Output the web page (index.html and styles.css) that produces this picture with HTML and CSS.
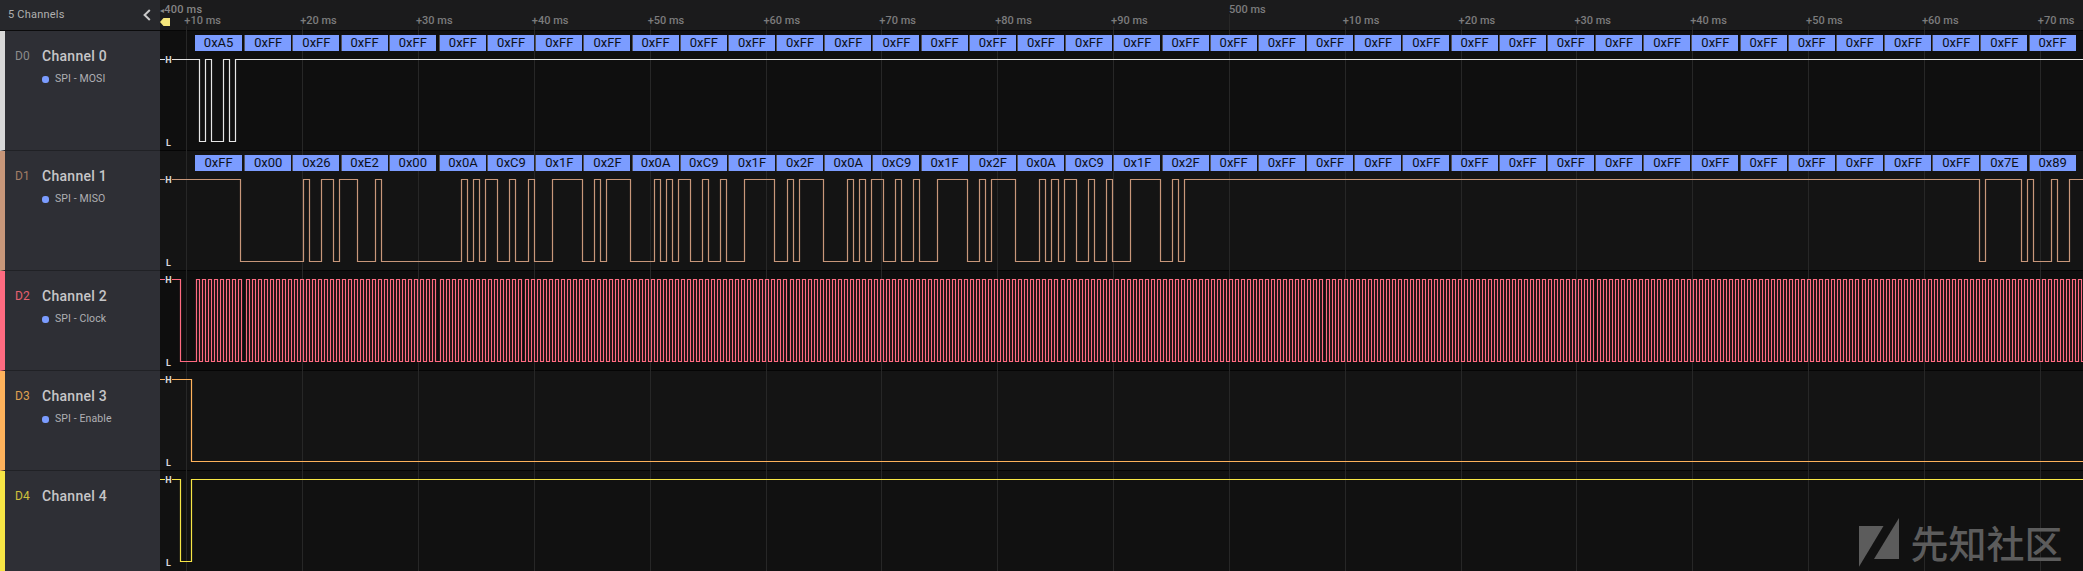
FILE: index.html
```html
<!DOCTYPE html>
<html lang="en">
<head>
<meta charset="utf-8">
<title>Logic capture</title>
<link rel="stylesheet" href="styles.css">
</head>
<body>
<div class="app">
  <aside class="side">
    <header class="side-head">
      <span>5 Channels</span>
      <svg class="chev" width="8" height="12" viewBox="0 0 8 12"><path d="M6.8 1 L1.6 6 L6.8 11"/></svg>
    </header>
    <section class="chan tall c0">
      <span class="chan-id">D0</span>
      <div class="chan-body"><div class="chan-name">Channel 0</div><div class="chan-tag"><i class="dot"></i>SPI - MOSI</div></div>
    </section>
    <section class="chan tall c1">
      <span class="chan-id">D1</span>
      <div class="chan-body"><div class="chan-name">Channel 1</div><div class="chan-tag"><i class="dot"></i>SPI - MISO</div></div>
    </section>
    <section class="chan c2">
      <span class="chan-id">D2</span>
      <div class="chan-body"><div class="chan-name">Channel 2</div><div class="chan-tag"><i class="dot"></i>SPI - Clock</div></div>
    </section>
    <section class="chan c3">
      <span class="chan-id">D3</span>
      <div class="chan-body"><div class="chan-name">Channel 3</div><div class="chan-tag"><i class="dot"></i>SPI - Enable</div></div>
    </section>
    <section class="chan last c4">
      <span class="chan-id">D4</span>
      <div class="chan-body"><div class="chan-name">Channel 4</div></div>
    </section>
  </aside>

  <main class="main">
    <div class="ruler">
      <span class="ruler-start"><span class="arrow">◂</span>400 ms</span>
      <svg class="marker" width="10" height="8" viewBox="0 0 10 8"><path d="M0 4 L3.5 0 H10 V8 H3.5 Z"/></svg>
    </div>
    <div class="grid">
      <div class="tick"><span class="tick-label">+10 ms</span><i class="tick-line"></i></div>
      <div class="tick"><span class="tick-label">+20 ms</span><i class="tick-line"></i></div>
      <div class="tick"><span class="tick-label">+30 ms</span><i class="tick-line"></i></div>
      <div class="tick"><span class="tick-label">+40 ms</span><i class="tick-line"></i></div>
      <div class="tick"><span class="tick-label">+50 ms</span><i class="tick-line"></i></div>
      <div class="tick"><span class="tick-label">+60 ms</span><i class="tick-line"></i></div>
      <div class="tick"><span class="tick-label">+70 ms</span><i class="tick-line"></i></div>
      <div class="tick"><span class="tick-label">+80 ms</span><i class="tick-line"></i></div>
      <div class="tick"><span class="tick-label">+90 ms</span><i class="tick-line"></i></div>
      <div class="tick major"><span class="tick-label">500 ms</span><i class="tick-line"></i></div>
      <div class="tick"><span class="tick-label">+10 ms</span><i class="tick-line"></i></div>
      <div class="tick"><span class="tick-label">+20 ms</span><i class="tick-line"></i></div>
      <div class="tick"><span class="tick-label">+30 ms</span><i class="tick-line"></i></div>
      <div class="tick"><span class="tick-label">+40 ms</span><i class="tick-line"></i></div>
      <div class="tick"><span class="tick-label">+50 ms</span><i class="tick-line"></i></div>
      <div class="tick"><span class="tick-label">+60 ms</span><i class="tick-line"></i></div>
      <div class="tick"><span class="tick-label">+70 ms</span><i class="tick-line"></i></div>
    </div>

    <div class="row tall r0" data-ch="0">
      <div class="bytes">
        <span class="byte first">0xA5</span><span class="byte">0xFF</span><span class="byte">0xFF</span><span class="byte">0xFF</span><span class="byte">0xFF</span><span class="byte skew">0xFF</span><span class="byte">0xFF</span><span class="byte">0xFF</span><span class="byte">0xFF</span><span class="byte">0xFF</span><span class="byte">0xFF</span><span class="byte">0xFF</span><span class="byte">0xFF</span><span class="byte">0xFF</span><span class="byte">0xFF</span><span class="byte">0xFF</span><span class="byte">0xFF</span><span class="byte">0xFF</span><span class="byte">0xFF</span><span class="byte">0xFF</span><span class="byte">0xFF</span><span class="byte">0xFF</span><span class="byte">0xFF</span><span class="byte">0xFF</span><span class="byte">0xFF</span><span class="byte">0xFF</span><span class="byte">0xFF</span><span class="byte">0xFF</span><span class="byte">0xFF</span><span class="byte">0xFF</span><span class="byte">0xFF</span><span class="byte">0xFF</span><span class="byte">0xFF</span><span class="byte">0xFF</span><span class="byte">0xFF</span><span class="byte">0xFF</span><span class="byte">0xFF</span><span class="byte">0xFF</span><span class="byte">0xFF</span>
      </div>
      <span class="lv lv-h">H</span><span class="lv lv-l">L</span>
    </div>
    <div class="row tall r1" data-ch="1">
      <div class="bytes">
        <span class="byte first">0xFF</span><span class="byte">0x00</span><span class="byte">0x26</span><span class="byte">0xE2</span><span class="byte">0x00</span><span class="byte skew">0x0A</span><span class="byte">0xC9</span><span class="byte">0x1F</span><span class="byte">0x2F</span><span class="byte">0x0A</span><span class="byte">0xC9</span><span class="byte">0x1F</span><span class="byte">0x2F</span><span class="byte">0x0A</span><span class="byte">0xC9</span><span class="byte">0x1F</span><span class="byte">0x2F</span><span class="byte">0x0A</span><span class="byte">0xC9</span><span class="byte">0x1F</span><span class="byte">0x2F</span><span class="byte">0xFF</span><span class="byte">0xFF</span><span class="byte">0xFF</span><span class="byte">0xFF</span><span class="byte">0xFF</span><span class="byte">0xFF</span><span class="byte">0xFF</span><span class="byte">0xFF</span><span class="byte">0xFF</span><span class="byte">0xFF</span><span class="byte">0xFF</span><span class="byte">0xFF</span><span class="byte">0xFF</span><span class="byte">0xFF</span><span class="byte">0xFF</span><span class="byte">0xFF</span><span class="byte">0x7E</span><span class="byte">0x89</span>
      </div>
      <span class="lv lv-h">H</span><span class="lv lv-l">L</span>
    </div>
    <div class="row r2" data-ch="2"><span class="lv lv-h">H</span><span class="lv lv-l">L</span></div>
    <div class="row r3" data-ch="3"><span class="lv lv-h">H</span><span class="lv lv-l">L</span></div>
    <div class="row last r4" data-ch="4"><span class="lv lv-h">H</span><span class="lv lv-l">L</span></div>
  </main>

  <div class="watermark">
    <svg width="41" height="49" viewBox="0 0 41 49"><path d="M0 8 H24.5 L0 48.7 Z"/><path d="M40 0 V41 H15 Z"/></svg>
    <span>先知社区</span>
  </div>
</div>
<script src="app.js"></script>
</body>
</html>
```

FILE: styles.css
```css
* { box-sizing: border-box; }
html, body { margin: 0; background: #111; }
.app {
  position: relative;
  display: flex;
  width: 2083px;
  height: 571px;
  overflow: hidden;
  font-family: Roboto, "Noto Sans", sans-serif;
}

/* channel sidebar */
.side { flex: 0 0 160px; display: flex; flex-direction: column; background: #2e2f35; }
.side-head {
  height: 31px;
  flex: none;
  display: flex;
  align-items: center;
  justify-content: space-between;
  padding: 0 9px 1px 8px;
  background: #27282c;
  border-bottom: 1px solid #0b0b0c;
  color: #b0b0b0;
  font-size: 11px;
  letter-spacing: .02em;
}
.chev path { fill: none; stroke: #c9c9c9; stroke-width: 2; }
.chan {
  height: 100px;
  flex: none;
  display: flex;
  padding: 15px 0 0 10px;
  border-left: 5px solid #888;
  border-bottom: 1px solid #202125;
}
.chan.tall { height: 120px; }
.chan.last { flex: 1; border-bottom: 0; }
.chan-id { flex: 0 0 27px; font-size: 12px; line-height: 20px; }
.chan-name { font-size: 14px; font-weight: 500; line-height: 20px; color: #c6c6c8; letter-spacing: .02em; }
.chan-tag {
  display: flex;
  align-items: center;
  gap: 6px;
  margin-top: 3px;
  font-size: 10.5px;
  line-height: 20px;
  color: #b0b0b4;
  letter-spacing: .01em;
}
.dot { width: 7px; height: 7px; border-radius: 3px; background: #7b9cff; }
.c0 { border-left-color: #d8d8d8; }
.c1 { border-left-color: #c8977a; }
.c2 { border-left-color: #ff6b81; }
.c3 { border-left-color: #ffb35c; }
.c4 { border-left-color: #f7e645; }
.c0 .chan-id { color: #8c8c8c; }
.c1 .chan-id { color: #a17d66; }
.c2 .chan-id { color: #e5606f; }
.c3 .chan-id { color: #dfa050; }
.c4 .chan-id { color: #cfc03c; }

/* timeline */
.main { position: relative; flex: 1; min-width: 0; display: flex; flex-direction: column; }
.ruler {
  position: relative;
  height: 31px;
  flex: none;
  background: #1b1b1c;
  border-bottom: 1px solid #060606;
}
.ruler-start {
  position: absolute;
  left: 0;
  top: 3px;
  font-size: 11px;
  line-height: 13px;
  font-weight: 500;
  color: #858585;
  white-space: nowrap;
  letter-spacing: .02em;
}
.arrow { font-family: "DejaVu Sans", sans-serif; font-size: 8px; }
.marker { position: absolute; left: 0; top: 18px; z-index: 3; }
.marker path { fill: #f5e77c; }

.grid {
  position: absolute;
  inset: 0;
  z-index: 1;
  display: flex;
  padding-left: 26.3px;
  overflow: hidden;
  pointer-events: none;
}
.tick { flex: 0 0 115.85px; display: flex; flex-direction: column; }
.tick-label {
  height: 26px;
  padding-top: 14px;
  margin-left: -2px;
  font-size: 11px;
  line-height: 13px;
  font-weight: 500;
  color: #7c7c7c;
  white-space: nowrap;
}
.tick.major .tick-label { height: 14px; padding-top: 3px; margin-left: 0; }
.tick-line { flex: 1; width: 1px; background: #272727; }

.row { position: relative; height: 100px; flex: none; border-bottom: 1px solid #050505; }
.row.tall { height: 120px; }
.row.last { flex: 1; height: auto; border-bottom: 0; }
.r0 { background: #0f0f0f; }
.r1 { background: #141414; }
.r2 { background: #0e0e0e; }
.r3 { background: #141414; }
.r4 { background: #111; }

.bytes {
  position: relative;
  z-index: 2;
  display: flex;
  gap: 2.18px;
  padding: 4px 0 0 35.3px;
}
.byte {
  flex: 0 0 46px;
  height: 16px;
  background: #7b9cff;
  box-shadow: -1px 0 0 #50505a;
  color: #0c0f18;
  font-size: 13px;
  line-height: 16px;
  text-align: center;
}
.byte.first { flex-basis: 46.7px; margin-right: 1.1px; box-shadow: none; }
.byte.skew { margin-left: 2px; }

.wave { position: absolute; left: 0; top: 0; z-index: 2; overflow: visible; }
.wave path { fill: none; stroke-width: 1.2; }
.r0 .wave path { stroke: #e6e6e6; }
.r1 .wave path { stroke: #c8977a; }
.r2 .wave path { stroke: #ff6b81; }
.r3 .wave path { stroke: #ffb35c; }
.r4 .wave path { stroke: #f7e645; }

.lv {
  position: absolute;
  left: 5px;
  z-index: 3;
  width: 7px;
  height: 10px;
  text-align: center;
  font-size: 9px;
  font-weight: 700;
  line-height: 10px;
  color: #dcdcdc;
  background: inherit;
}
.lv-h { top: 3.5px; }
.lv-l { top: 87px; }
.row.tall .lv-h { top: 23.5px; }
.row.tall .lv-l { top: 107px; }

/* watermark */
.watermark {
  position: absolute;
  left: 1858.5px;
  top: 518px;
  z-index: 4;
  display: flex;
  align-items: flex-start;
  gap: 11px;
  color: #5c5c5c;
  font-family: "Noto Sans CJK SC", sans-serif;
  font-size: 38px;
  font-weight: 500;
  line-height: 50px;
}
.watermark svg path { fill: #5c5c5c; }
.watermark span { white-space: nowrap; margin-top: -1px; }
```

FILE: app.js
```js
var LEFT = 160, WIDTH = 1923, BIT = 6.02;

function byteX(k) {
  var early = [195.3, 245.3, 293.7, 341.7, 389.7];
  return k < 5 ? early[k] : 440 + 48.18 * (k - 5);
}

function edgesFromBytes(bytes) {
  var edges = [], level = 1;
  bytes.forEach(function (b) {
    for (var i = 0; i < 8; i++) {
      var bit = (b.v >> (7 - i)) & 1;
      if (bit !== level) { edges.push(b.s + i * BIT); level = bit; }
    }
  });
  return edges;
}

var miso = [0xFF, 0x00, 0x26, 0xE2, 0x00];
for (var r = 0; r < 4; r++) miso.push(0x0A, 0xC9, 0x1F, 0x2F);
for (var f = 0; f < 16; f++) miso.push(0xFF);
miso.push(0x7E, 0x89);

var misoBytes = miso.map(function (v, k) {
  var s = byteX(k) - 2.3;
  if (k === 0) s = 191.84;
  if (k === 1) s = 240;
  return { v: v, s: s };
});

var clock = [180.5];
for (var k = 0; k < 40; k++) {
  for (var j = 0; j < 8; j++) {
    var rise = byteX(k) + 0.7 + j * BIT;
    clock.push(rise, rise + 3);
  }
}

var channels = [
  edgesFromBytes([{ v: 0xA5, s: 193.5 }]),
  edgesFromBytes(misoBytes),
  clock,
  [191.5],
  [180.5, 191.5]
];

document.querySelectorAll('.row').forEach(function (row) {
  var ch = +row.dataset.ch;
  var high = ch < 2 ? 28.5 : 8.5, low = high + 82;
  var level = high;
  var d = 'M0 ' + high;
  channels[ch].forEach(function (x) {
    /* snap each edge to the centre of a pixel column, as the capture view does */
    var px = Math.floor(x - LEFT) + 0.5;
    level = level === high ? low : high;
    d += ' H' + px + ' V' + level;
  });
  d += ' H' + WIDTH;
  var ns = 'http://www.w3.org/2000/svg';
  var svg = document.createElementNS(ns, 'svg');
  svg.setAttribute('class', 'wave');
  svg.setAttribute('width', WIDTH);
  svg.setAttribute('height', 120);
  var path = document.createElementNS(ns, 'path');
  path.setAttribute('d', d);
  svg.appendChild(path);
  row.insertBefore(svg, row.firstChild);
});
```
